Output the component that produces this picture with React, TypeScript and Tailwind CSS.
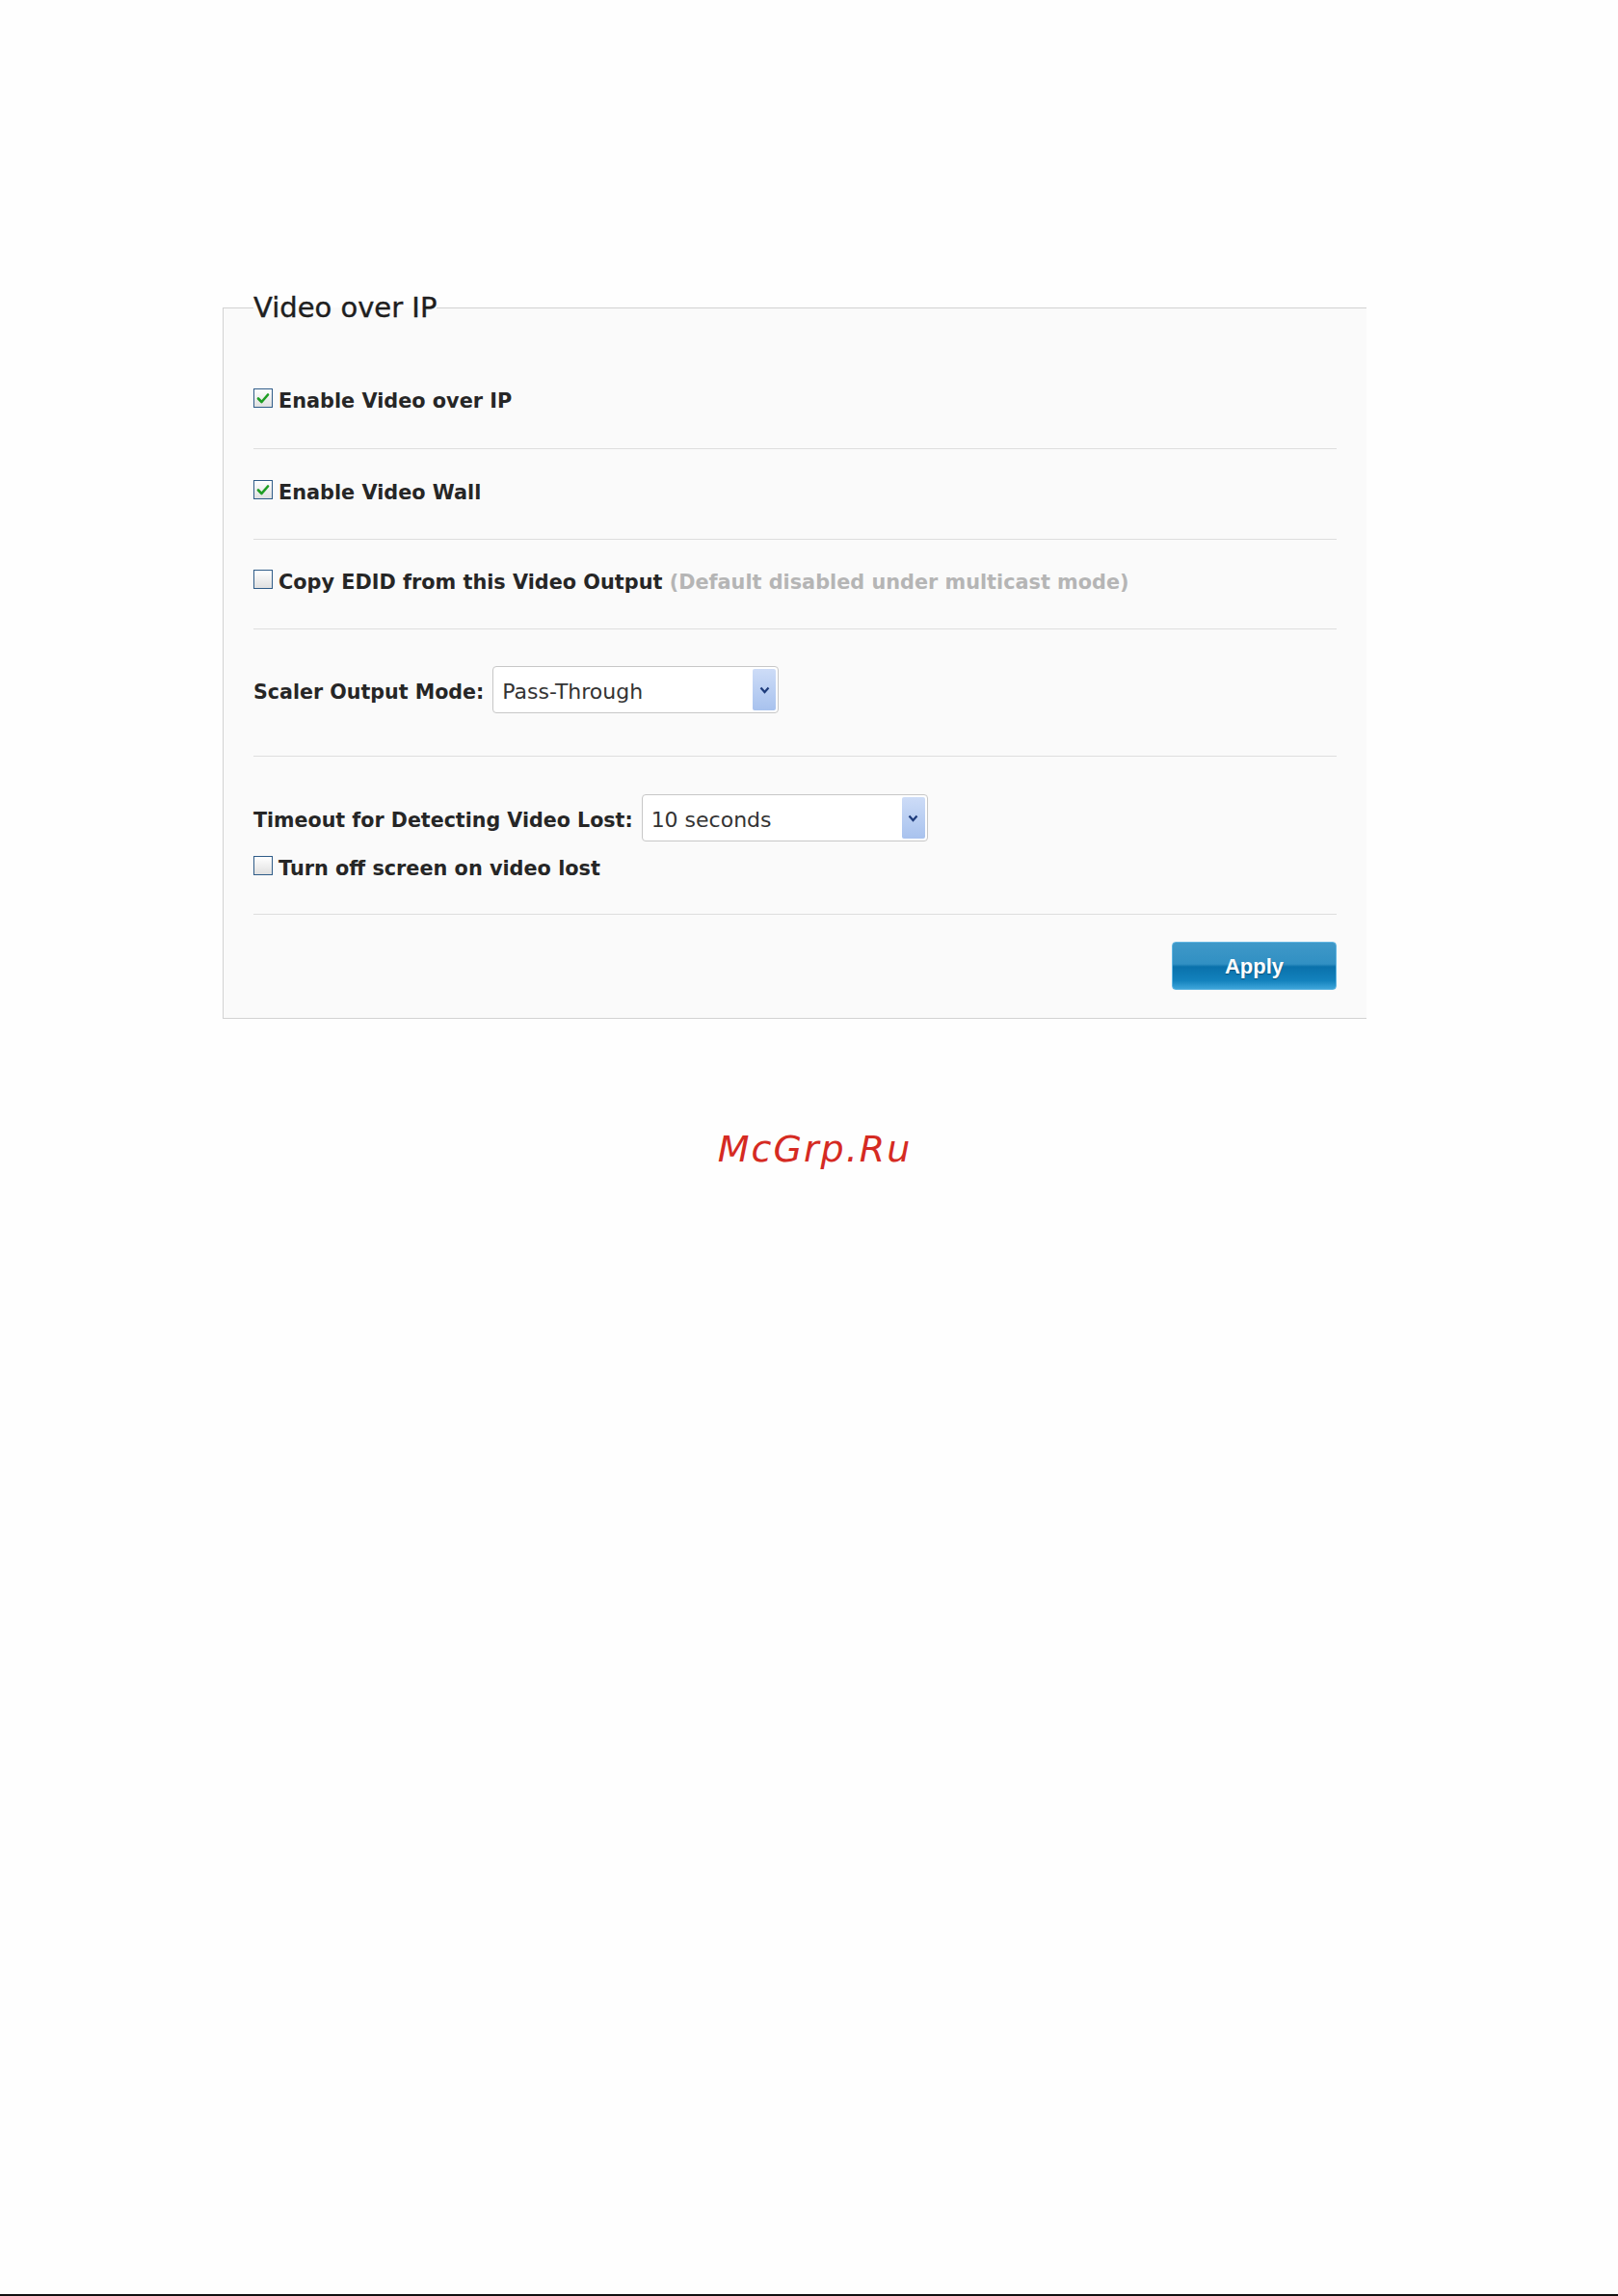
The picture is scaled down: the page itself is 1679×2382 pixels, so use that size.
import React from 'react';

const labelFont = { fontFamily: '"DejaVu Sans", Verdana, sans-serif' };

const CheckBox = ({ checked }: { checked?: boolean }) => (
  <div className="w-[20px] h-[20px] shrink-0 border border-[#2f5c88] bg-gradient-to-b from-white to-[#e0e0e0] flex items-center justify-center">
    {checked && (
      <svg width="14" height="12" viewBox="0 0 14 12">
        <path d="M2 6.5 L5.5 10 L12 2.5" fill="none" stroke="#1f9e24" strokeWidth="2.6" strokeLinecap="round" strokeLinejoin="round" />
      </svg>
    )}
  </div>
);

const SelectBox = ({ value }: { value: string }) => (
  <div className="w-[297px] h-[49px] ml-[9px] border border-[#c7c7c7] rounded-[4px] bg-white flex items-center justify-between pl-[9px] pr-[2px]">
    <span className="relative top-[2px] text-[22px] text-[#333]" style={labelFont}>{value}</span>
    <div className="w-[24px] h-[43px] rounded-[2px] bg-gradient-to-b from-[#cddcf7] to-[#a8c2ee] flex items-center justify-center">
      <svg width="11" height="8" viewBox="0 0 11 8">
        <path d="M1.5 1.5 L5.5 6 L9.5 1.5" fill="none" stroke="#1e3c7c" strokeWidth="2.2" />
      </svg>
    </div>
  </div>
);

const CheckRow = ({ checked, children }: { checked?: boolean; children: React.ReactNode }) => (
  <div className="flex items-center h-[20px]">
    <CheckBox checked={checked} />
    <span className="relative top-[4px] ml-[6px] text-[20.8px] font-bold text-[#262626] whitespace-nowrap" style={labelFont}>
      {children}
    </span>
  </div>
);

export default function App() {
  return (
    <div className="min-h-[2382px] bg-[#fefefe] flex flex-col">
      <div className="pt-[303px] pl-[231px]">
        <fieldset className="w-[1187px] border-l border-t border-b border-[#d2d2d2] bg-[#fafafa] pl-[31px] pr-[31px]">
          <legend
            className="text-[29px] leading-[32px] text-[#1e1e1e] [-webkit-text-stroke:0.4px_#1e1e1e]"
            style={labelFont}
          >
            Video over IP
          </legend>

          {/* checkbox options */}
          <div className="pt-[68px] pb-[42px] border-b border-[#dedede]">
            <CheckRow checked>Enable Video over IP</CheckRow>
          </div>
          <div className="pt-[32px] pb-[41px] border-b border-[#dedede]">
            <CheckRow checked>Enable Video Wall</CheckRow>
          </div>
          <div className="pt-[31px] pb-[41px] border-b border-[#dedede]">
            <CheckRow>
              Copy EDID from this Video Output{' '}
              <span className="text-[#b5b5b5]">(Default disabled under multicast mode)</span>
            </CheckRow>
          </div>

          {/* scaler */}
          <div className="pt-[38px] pb-[44px] border-b border-[#dedede]">
            <div className="flex items-center">
              <span className="relative top-[3px] text-[20.6px] font-bold text-[#262626]" style={labelFont}>Scaler Output Mode:</span>
              <SelectBox value="Pass-Through" />
            </div>
          </div>

          {/* timeout */}
          <div className="pt-[39px] pb-[40px] border-b border-[#dedede]">
            <div className="flex items-center">
              <span className="relative top-[3px] text-[20.6px] font-bold text-[#262626]" style={labelFont}>Timeout for Detecting Video Lost:</span>
              <SelectBox value="10 seconds" />
            </div>
            <div className="mt-[15px]">
              <CheckRow>Turn off screen on video lost</CheckRow>
            </div>
          </div>

          <div className="pt-[28px] pb-[29px] flex justify-end">
            <button
              className="w-[171px] h-[50px] rounded-[4px] border border-[#62b6e2] bg-[linear-gradient(to_bottom,#3f98c8_0%,#3190c3_46%,#0a71ab_52%,#1382bd_82%,#3da5da_100%)] text-white font-bold text-[22px] [text-shadow:0_1px_1px_rgba(0,0,0,0.35)]"
              style={{ fontFamily: '"Liberation Sans", Arial, sans-serif' }}
            >
              Apply
            </button>
          </div>
        </fieldset>
      </div>

      <div
        className="mt-[116px] pl-[12px] text-center text-[38px] leading-[38px] italic tracking-[2px] text-[#d52a22]"
        style={labelFont}
      >
        McGrp.Ru
      </div>

      <div className="flex-1" />
      <div className="h-[2px] bg-[#111]" />
    </div>
  );
}
